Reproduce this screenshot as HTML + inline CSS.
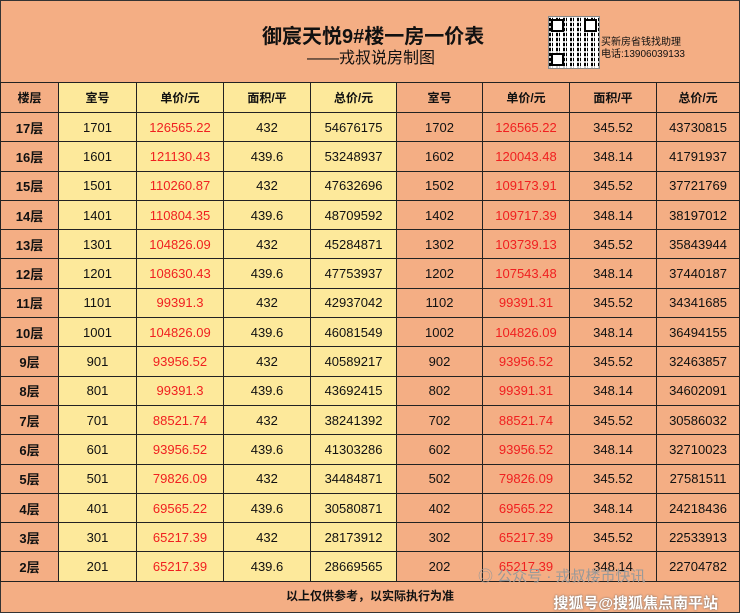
<!DOCTYPE html>
<html><head><meta charset="utf-8"><style>
body{margin:0;width:740px;height:613px;background:#f4ae84;font-family:"Liberation Sans","Noto Sans CJK SC",sans-serif;position:relative;overflow:hidden}
.frame{position:absolute;left:0;top:0;width:738px;height:611px;border:1px solid #333}
.t1{position:absolute;left:262px;top:20px;font-size:20px;font-weight:bold;color:#111}
.t2{position:absolute;left:307px;top:44px;font-size:16px;color:#111}
.qr{position:absolute;left:548px;top:16px;width:50px;height:51px;border:1px solid #888;background:
repeating-linear-gradient(0deg,rgba(255,255,255,.8) 0 2px,transparent 2px 5px),
repeating-linear-gradient(90deg,#000 0 2px,#fff 2px 3px,#000 3px 4px,#fff 4px 7px)}
.qr i{position:absolute;width:9px;height:9px;border:2px solid #000;background:#fff}
.qt{position:absolute;left:601px;top:37px;font-size:10px;line-height:12px;color:#111}
table{position:absolute;left:0;top:82px;border-collapse:collapse;width:740px}
td{border:1px solid #222;height:28.3px;padding:0;text-align:center;font-size:13px;color:#111}
tr td:first-child{font-weight:bold}
.y{background:#fde99b}
.r{color:#f02020}
.hd td{height:29px;font-weight:bold;font-size:12px}
.foot{position:absolute;left:0;top:582px;width:740px;height:29px;text-align:center;line-height:29px;font-size:12px;font-weight:bold;color:#111}
.wm{position:absolute;right:22px;top:592px;color:#fff;font-size:15px;font-weight:bold;text-shadow:0 0 2px #666}
.wm2{position:absolute;left:478px;top:565px;color:#999;font-size:15px}
</style></head><body>
<div class="frame"></div>
<div class="t1">御宸天悦9#楼一房一价表</div>
<div class="t2">——戎叔说房制图</div>
<div class="qr"><i style="left:2px;top:2px"></i><i style="right:2px;top:2px"></i><i style="left:2px;bottom:2px"></i></div>
<div class="qt">买新房省钱找助理<br>电话:13906039133</div>
<table>
<tr class="hd"><td style="width:57px">楼层</td><td class="y" style="width:77px">室号</td><td class="y" style="width:86px">单价/元</td><td class="y" style="width:86px">面积/平</td><td class="y" style="width:85px">总价/元</td><td style="width:85px">室号</td><td style="width:86px">单价/元</td><td style="width:86px">面积/平</td><td>总价/元</td></tr>
<tr><td>17层</td><td class="y">1701</td><td class="y r">126565.22</td><td class="y">432</td><td class="y">54676175</td><td>1702</td><td class="r">126565.22</td><td>345.52</td><td>43730815</td></tr>
<tr><td>16层</td><td class="y">1601</td><td class="y r">121130.43</td><td class="y">439.6</td><td class="y">53248937</td><td>1602</td><td class="r">120043.48</td><td>348.14</td><td>41791937</td></tr>
<tr><td>15层</td><td class="y">1501</td><td class="y r">110260.87</td><td class="y">432</td><td class="y">47632696</td><td>1502</td><td class="r">109173.91</td><td>345.52</td><td>37721769</td></tr>
<tr><td>14层</td><td class="y">1401</td><td class="y r">110804.35</td><td class="y">439.6</td><td class="y">48709592</td><td>1402</td><td class="r">109717.39</td><td>348.14</td><td>38197012</td></tr>
<tr><td>13层</td><td class="y">1301</td><td class="y r">104826.09</td><td class="y">432</td><td class="y">45284871</td><td>1302</td><td class="r">103739.13</td><td>345.52</td><td>35843944</td></tr>
<tr><td>12层</td><td class="y">1201</td><td class="y r">108630.43</td><td class="y">439.6</td><td class="y">47753937</td><td>1202</td><td class="r">107543.48</td><td>348.14</td><td>37440187</td></tr>
<tr><td>11层</td><td class="y">1101</td><td class="y r">99391.3</td><td class="y">432</td><td class="y">42937042</td><td>1102</td><td class="r">99391.31</td><td>345.52</td><td>34341685</td></tr>
<tr><td>10层</td><td class="y">1001</td><td class="y r">104826.09</td><td class="y">439.6</td><td class="y">46081549</td><td>1002</td><td class="r">104826.09</td><td>348.14</td><td>36494155</td></tr>
<tr><td>9层</td><td class="y">901</td><td class="y r">93956.52</td><td class="y">432</td><td class="y">40589217</td><td>902</td><td class="r">93956.52</td><td>345.52</td><td>32463857</td></tr>
<tr><td>8层</td><td class="y">801</td><td class="y r">99391.3</td><td class="y">439.6</td><td class="y">43692415</td><td>802</td><td class="r">99391.31</td><td>348.14</td><td>34602091</td></tr>
<tr><td>7层</td><td class="y">701</td><td class="y r">88521.74</td><td class="y">432</td><td class="y">38241392</td><td>702</td><td class="r">88521.74</td><td>345.52</td><td>30586032</td></tr>
<tr><td>6层</td><td class="y">601</td><td class="y r">93956.52</td><td class="y">439.6</td><td class="y">41303286</td><td>602</td><td class="r">93956.52</td><td>348.14</td><td>32710023</td></tr>
<tr><td>5层</td><td class="y">501</td><td class="y r">79826.09</td><td class="y">432</td><td class="y">34484871</td><td>502</td><td class="r">79826.09</td><td>345.52</td><td>27581511</td></tr>
<tr><td>4层</td><td class="y">401</td><td class="y r">69565.22</td><td class="y">439.6</td><td class="y">30580871</td><td>402</td><td class="r">69565.22</td><td>348.14</td><td>24218436</td></tr>
<tr><td>3层</td><td class="y">301</td><td class="y r">65217.39</td><td class="y">432</td><td class="y">28173912</td><td>302</td><td class="r">65217.39</td><td>345.52</td><td>22533913</td></tr>
<tr><td>2层</td><td class="y">201</td><td class="y r">65217.39</td><td class="y">439.6</td><td class="y">28669565</td><td>202</td><td class="r">65217.39</td><td>348.14</td><td>22704782</td></tr>
</table>
<div class="foot">以上仅供参考，以实际执行为准</div>
<div class="wm2">◎ 公众号 · 戎叔楼市快讯</div>
<div class="wm">搜狐号@搜狐焦点南平站</div>
</body></html>
